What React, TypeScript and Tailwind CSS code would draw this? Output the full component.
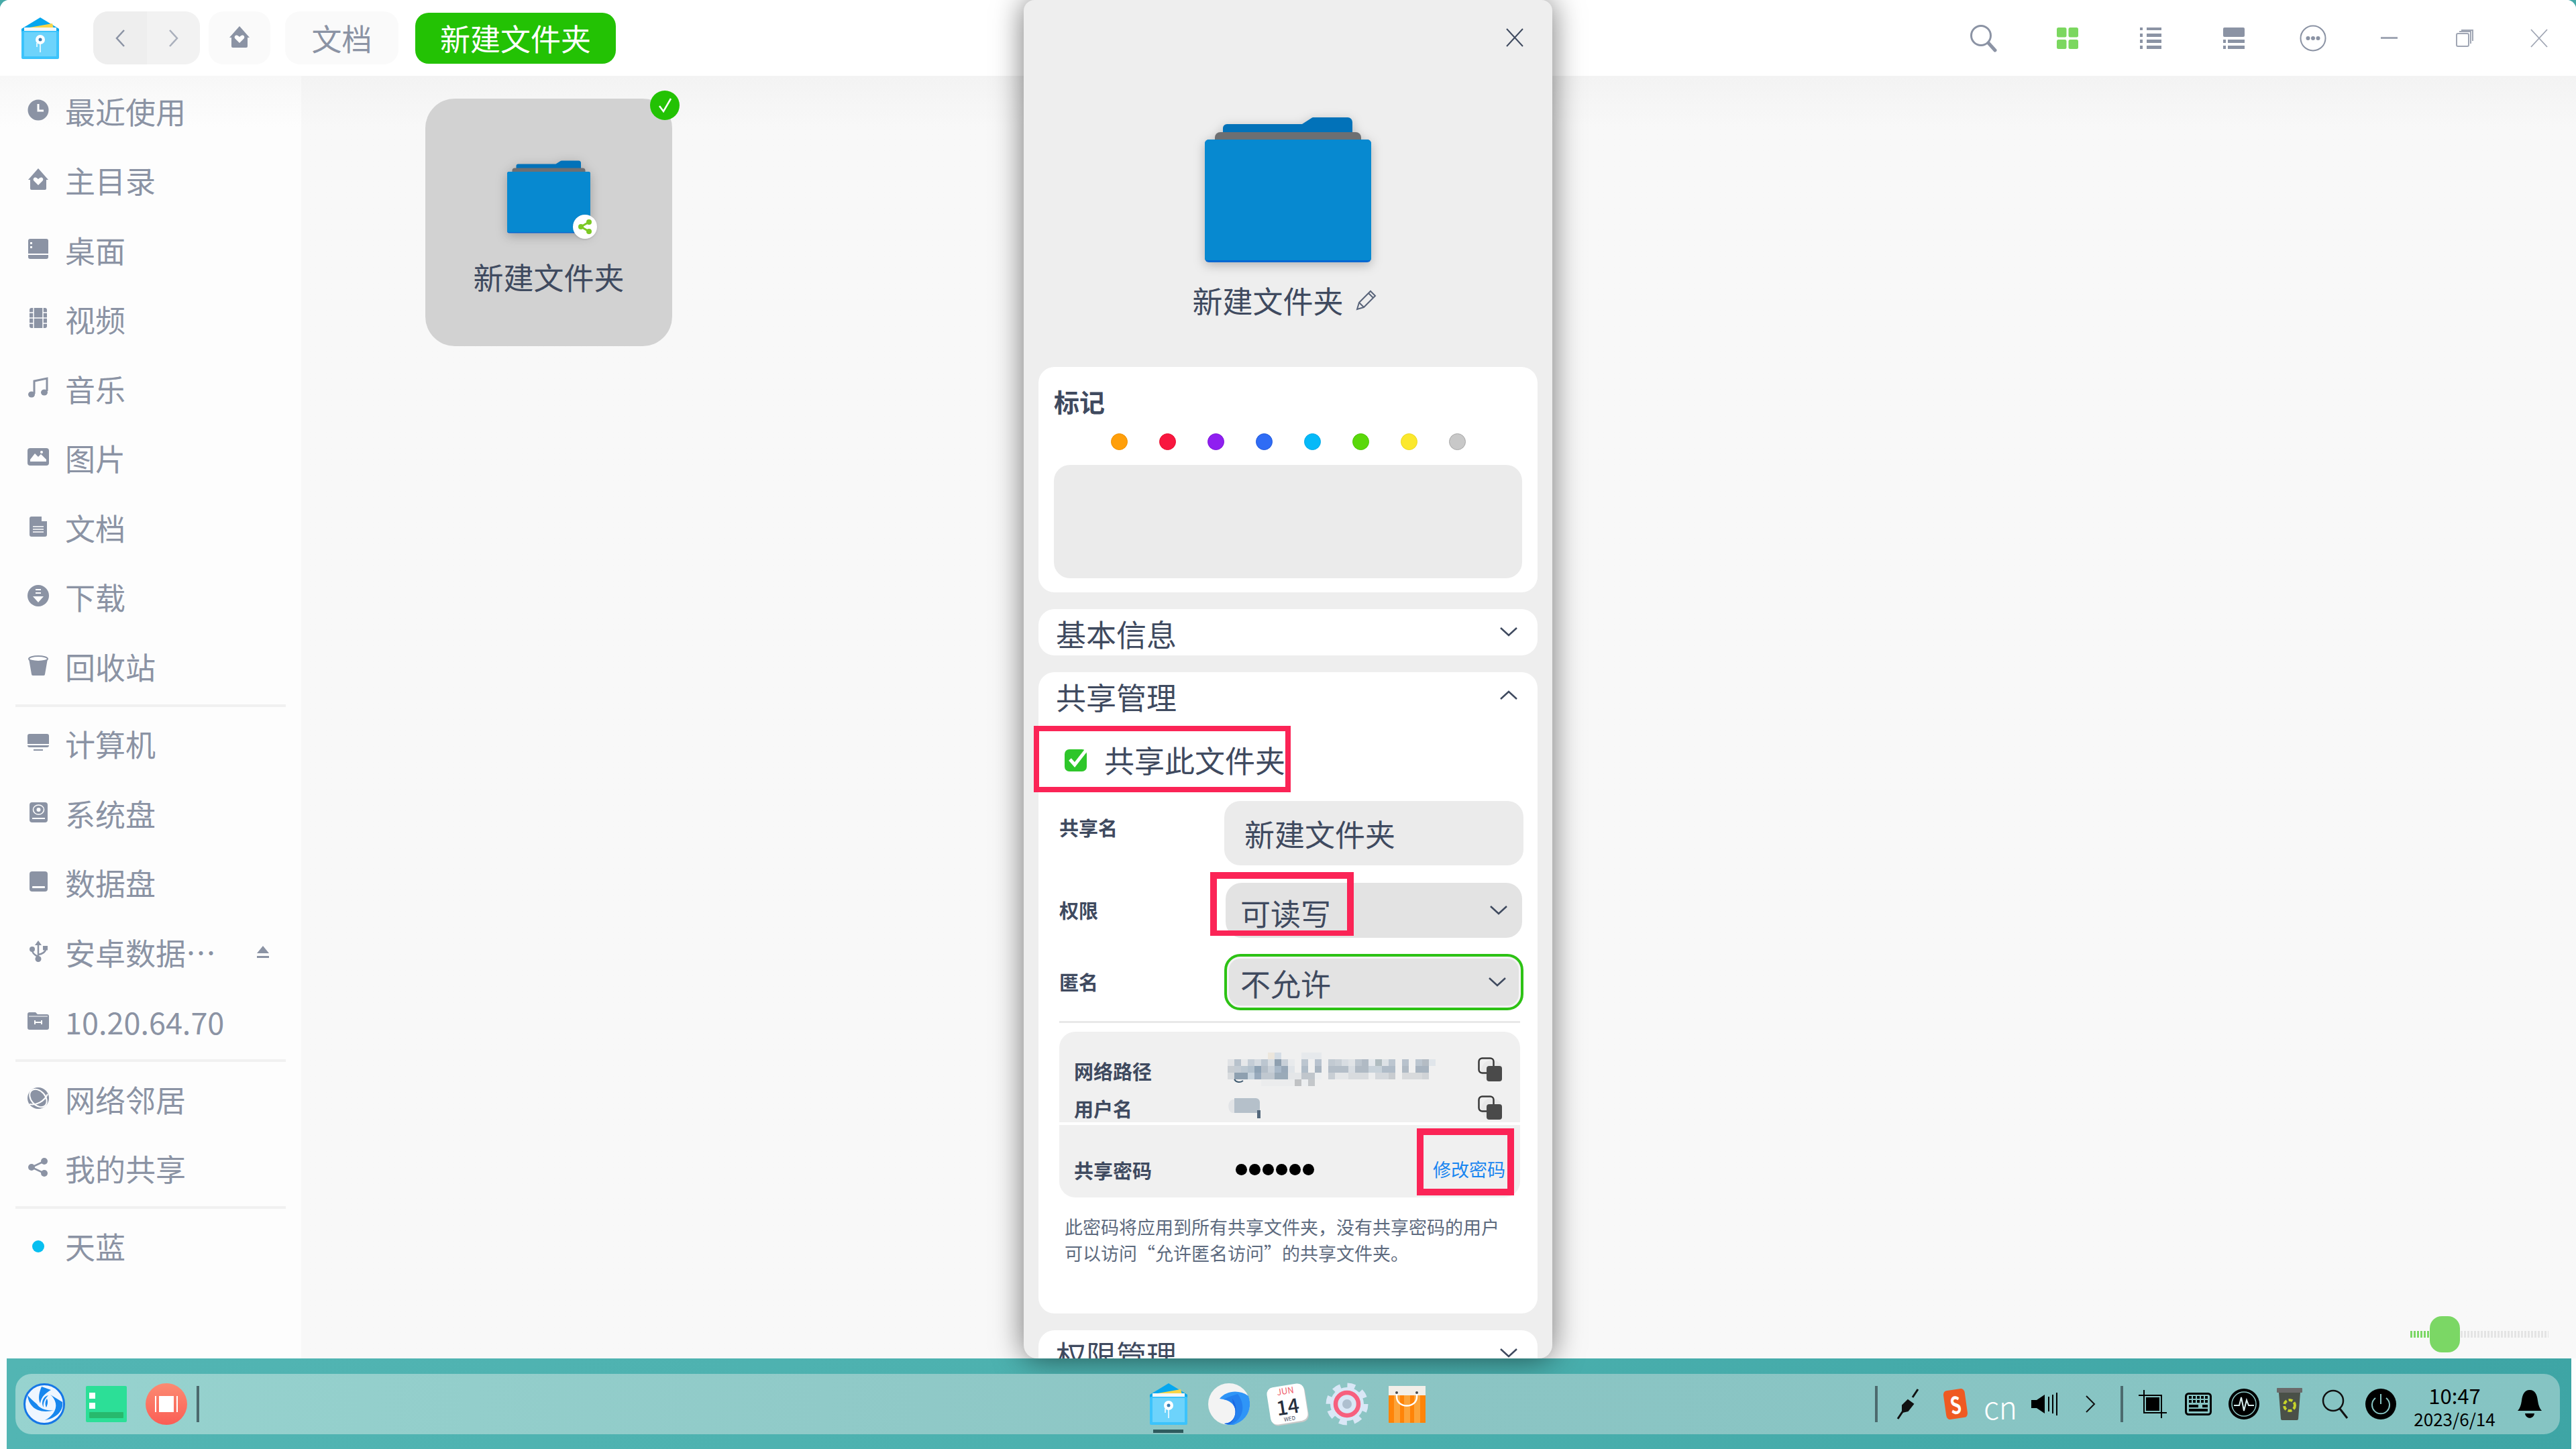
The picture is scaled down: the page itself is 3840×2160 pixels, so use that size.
import React from "react";

const G = "#8b93a4";

const sideIcons: Record<string, React.ReactNode> = {
  clock: (
    <>
      <circle cx="16" cy="16" r="15.500" fill={G} />
      <path d="M16 7v10h8" fill="none" stroke="#fff" strokeWidth="3" />
    </>
  ),
  home: (
    <>
      <path d="M16 0l15 17h-3v13a2 2 0 0 1-2 2H6a2 2 0 0 1-2-2V17H1z" fill={G} />
      <path d="M16 25l-6.500-6.500c-2.500-3 1-6.500 4-4.500l2.500 2 2.500-2c3-2 6.500 1.500 4 4.500z" fill="#fff" />
    </>
  ),
  desktop: (
    <>
      <rect x="1" y="1" width="30" height="30" rx="3" fill={G} />
      <rect x="1" y="23" width="30" height="2" fill="#fff" />
      <rect x="4" y="6" width="3" height="3" fill="#fff" />
      <rect x="4" y="12" width="3" height="3" fill="#fff" />
    </>
  ),
  video: (
    <>
      <rect x="3" y="1" width="26" height="30" rx="3" fill={G} />
      <path d="M9 1v30M23 1v30" stroke="#fff" strokeWidth="1.500" />
      <path d="M3 8h6M3 16h6M3 24h6M23 8h6M23 16h6M23 24h6M9 16h14" stroke="#fff" strokeWidth="1.500" />
    </>
  ),
  music: (
    <>
      <path d="M10 25V6l19-4v19" fill="none" stroke={G} strokeWidth="3" />
      <ellipse cx="6" cy="26" rx="5" ry="4.500" fill={G} />
      <ellipse cx="25" cy="23" rx="5" ry="4.500" fill={G} />
    </>
  ),
  image: (
    <>
      <rect x="0" y="3" width="32" height="26" rx="4" fill={G} />
      <path d="M4 20l7-9 5 5 4-4 8 8v3H4z" fill="#fff" />
      <circle cx="21" cy="9" r="2" fill="#fff" />
    </>
  ),
  doc: (
    <>
      <path d="M3 4a3 3 0 0 1 3-3h15v7h8v20a3 3 0 0 1-3 3H6a3 3 0 0 1-3-3z" fill={G} />
      <path d="M8 16h16M8 20h16M8 24h16" stroke="#fff" strokeWidth="1.500" />
    </>
  ),
  download: (
    <>
      <circle cx="16" cy="16" r="16" fill={G} />
      <path d="M12 7h8M12 12h8" stroke="#fff" strokeWidth="2" />
      <path d="M8 17h16l-8 9z" fill="#fff" />
    </>
  ),
  trash: (
    <>
      <path d="M2 6h28l-4 23a2 2 0 0 1-2 2H8a2 2 0 0 1-2-2z" fill={G} />
      <ellipse cx="16" cy="6" rx="14" ry="4" fill="#fff" stroke={G} strokeWidth="2" />
    </>
  ),
  computer: (
    <>
      <rect x="0" y="3" width="32" height="20" rx="3" fill={G} />
      <rect x="0" y="18" width="32" height="2" fill="#fff" />
      <rect x="9" y="26" width="14" height="2" fill={G} />
    </>
  ),
  system: (
    <>
      <rect x="3" y="1" width="27" height="30" rx="4" fill={G} />
      <rect x="7" y="24" width="19" height="2" fill="#fff" />
      <ellipse cx="16.500" cy="12" rx="8" ry="7" fill="none" stroke="#fff" strokeWidth="1.500" />
      <circle cx="16.500" cy="12" r="3" fill="#fff" />
    </>
  ),
  data: (
    <>
      <rect x="3" y="1" width="27" height="30" rx="4" fill={G} />
      <rect x="7" y="23" width="19" height="3" rx="1" fill="#fff" />
    </>
  ),
  usb: (
    <>
      <path d="M16 4v24M7 14c0 5 4 8 9 10M27 13c0 4-5 7-11 8" fill="none" stroke={G} strokeWidth="2.500" />
      <path d="M16 0l5 7H11z" fill={G} />
      <circle cx="16" cy="27.500" r="4.500" fill={G} />
      <circle cx="7" cy="13" r="4" fill={G} />
      <rect x="23" y="8" width="7" height="6.500" fill={G} />
    </>
  ),
  net: (
    <>
      <path d="M0 7a3 3 0 0 1 3-3h9l3 3h14a3 3 0 0 1 3 3v17a3 3 0 0 1-3 3H3a3 3 0 0 1-3-3z" fill={G} />
      <path d="M2 10h28" stroke="#fff" strokeWidth="1" />
      <path d="M11 19h10M11 16v6M21 16v6" stroke="#fff" strokeWidth="2" />
    </>
  ),
  globe: (
    <>
      <circle cx="16" cy="16" r="16" fill={G} />
      <ellipse cx="16" cy="16" rx="10.500" ry="15" fill="none" stroke="#fff" strokeWidth="2" transform="rotate(-42 16 16)" />
      <path d="M3 25c10 2 22-4 27-15" fill="none" stroke="#fff" strokeWidth="2" />
    </>
  ),
  share: (
    <>
      <path d="M25 7L6 16l19 9" fill="none" stroke={G} strokeWidth="2.500" />
      <circle cx="25" cy="7" r="5" fill={G} />
      <circle cx="6" cy="16" r="5" fill={G} />
      <circle cx="25" cy="25" r="5" fill={G} />
    </>
  ),
  sky: <circle cx="16" cy="18" r="9" fill="#07bff0" />,
};

const sections = [
  [
    ["clock", "最近使用"],
    ["home", "主目录"],
    ["desktop", "桌面"],
    ["video", "视频"],
    ["music", "音乐"],
    ["image", "图片"],
    ["doc", "文档"],
    ["download", "下载"],
    ["trash", "回收站"],
  ],
  [
    ["computer", "计算机"],
    ["system", "系统盘"],
    ["data", "数据盘"],
    ["usb", "安卓数据…"],
    ["net", "10.20.64.70"],
  ],
  [
    ["globe", "网络邻居"],
    ["share", "我的共享"],
  ],
  [["sky", "天蓝"]],
];

const tagColors = [
  "bg-[#ff9f0a] border-[#f09000]",
  "bg-[#f8173f] border-[#e81030]",
  "bg-[#8f1ff0] border-[#7d15d8]",
  "bg-[#2f6cf5] border-[#2058dc]",
  "bg-[#05b9f8] border-[#05aae8]",
  "bg-[#5ad80a] border-[#4cc505]",
  "bg-[#fbe82d] border-[#ecd820]",
  "bg-[#c8c8c8] border-[#a8a8a8]",
];

// blurred-out network path, one list of [x, width, colour] per 10px row
const mosaic: [number, [number, number, string][]][] = [
  [0, [[60, 10, "#ece6dc"], [70, 10, "#d5dde5"], [110, 30, "#e6e9ec"]]],
  [10, [[0, 10, "#e0e2e5"], [10, 10, "#b8c2cc"], [20, 10, "#e6e8ea"], [30, 10, "#c4cdd6"], [40, 10, "#d4dae0"], [50, 10, "#bcc6d0"], [60, 10, "#d8dde2"], [70, 10, "#8fa0b0"], [80, 10, "#c8d0d8"], [90, 10, "#e8eaec"], [110, 10, "#bcc6d0"], [120, 10, "#f0f0f0"], [130, 10, "#b8c2ce"], [150, 10, "#c2cad2"], [160, 10, "#c8cfd6"], [170, 10, "#d8dde2"], [180, 10, "#e0e3e6"], [190, 10, "#bcc5ce"], [200, 10, "#b0bac4"], [210, 10, "#e4e8ec"], [220, 10, "#b0bcc0"], [230, 10, "#dde2e6"], [240, 10, "#bcc6d0"], [260, 10, "#b8c2cc"], [280, 10, "#bcc6d0"], [290, 10, "#b4bcc4"], [300, 10, "#e0e5ea"]]],
  [20, [[0, 10, "#c8cdd2"], [10, 10, "#c4ccd4"], [20, 10, "#bcc8d2"], [30, 10, "#b4c2ce"], [40, 10, "#8ea2b4"], [50, 10, "#b4bec8"], [60, 10, "#c8d0d8"], [70, 10, "#a8b8c8"], [80, 10, "#98a8b8"], [90, 10, "#e0e4e8"], [110, 10, "#b0bcc8"], [120, 10, "#f0f0f0"], [130, 10, "#a8b4c0"], [150, 30, "#b4bec8"], [180, 10, "#d8dde2"], [190, 20, "#b0bac4"], [210, 20, "#c8d2da"], [230, 20, "#b0bcc8"], [260, 10, "#b0bac4"], [280, 20, "#a8b4c0"]]],
  [30, [[0, 10, "#d8dbde"], [10, 20, "#8ea0b0"], [30, 10, "#c8d4de"], [40, 10, "#98aabc"], [50, 20, "#c0c8d0"], [70, 20, "#9aaab8"], [90, 20, "#e4e6e8"], [110, 20, "#c0c6cc"], [130, 10, "#eceef0"], [150, 10, "#c8ced4"], [160, 20, "#e4e6e8"], [180, 30, "#d8dbde"], [210, 10, "#ecedee"], [220, 20, "#d4d8dc"], [240, 10, "#c8ccd0"], [260, 30, "#d8dadc"], [290, 10, "#d0d3d6"]]],
  [40, [[50, 50, "#ebeced"], [100, 10, "#c0c2c4"], [110, 10, "#eceef0"], [120, 10, "#c4c7ca"]]],
];

const Side = ({ icon }: { icon: string }) => (
  <svg width="32" height="32" viewBox="0 0 32 32" className="mb-[4px] shrink-0">
    {sideIcons[icon]}
  </svg>
);

const Chevron = ({ up, className }: { up?: boolean; className?: string }) => (
  <svg width="26" height="14" viewBox="0 0 26 14" className={className}>
    <path d={up ? "M1 13L13 2l12 11" : "M1 1l12 11L25 1"} fill="none" stroke="#3f4a5f" strokeWidth="2.500" />
  </svg>
);

const Folder = ({ width, height }: { width: number; height: number }) => (
  <svg width={width} height={height} viewBox="0 0 248 216" className="drop-shadow-[0_4px_8px_rgba(0,0,0,0.25)]">
    <path d="M27 16a6 6 0 0 1 6-6h112l14-9a6 6 0 0 1 4-1h50a7 7 0 0 1 7 7v30H27z" fill="#0272b9" />
    <path d="M15 30a8 8 0 0 1 8-8h202a8 8 0 0 1 8 8v8H15z" fill="#6d6f72" />
    <rect x="0" y="33" width="248" height="183" rx="6" fill="#0668d2" />
    <path d="M0 39a6 6 0 0 1 6-6h236a6 6 0 0 1 6 6v171a3 3 0 0 1-3 3H3a3 3 0 0 1-3-3z" fill="#0789d0" />
  </svg>
);

const CopyIcon = () => (
  <svg width="36" height="36" viewBox="0 0 36 36">
    <circle cx="21" cy="20" r="16" fill="#e8e8e8" />
    <rect x="1.500" y="1.500" width="22" height="22" rx="5" fill="none" stroke="#3a3a3a" strokeWidth="2.500" />
    <rect x="13" y="13" width="23" height="23" rx="4" fill="#4a4a4a" />
  </svg>
);

const CardHeader = ({ title, up }: { title: string; up?: boolean }) => (
  <div className="relative flex h-[69px] items-center justify-between pl-[26px] pr-[30px]">
    <span className="pt-[5px] text-[45px] leading-[60px] text-[#3f4a5f]">{title}</span>
    <Chevron up={up} className="mb-[1px]" />
  </div>
);

const FileManagerIcon = () => (
  <svg width="56" height="62" viewBox="0 0 56 62">
    <path d="M0 17L28 0l28 17v8H0z" fill="#05a7ef" />
    <path d="M6 16l40-7 3 12H6z" fill="#f8d548" />
    <rect x="4" y="15" width="48" height="10" fill="#f4f7f9" />
    <rect x="0" y="20" width="56" height="42" rx="2" fill="#3cc3fb" />
    <rect x="4" y="22" width="48" height="36" fill="#6dd3fb" />
    <circle cx="28" cy="33" r="7" fill="#fff" />
    <circle cx="28" cy="33" r="2.500" fill="#3b7bb0" />
    <path d="M28 38v14M23 38v6" stroke="#fff" strokeWidth="1.500" />
  </svg>
);

const TrayIcon = ({ children, className = "w-[68px]" }: { children: React.ReactNode; className?: string }) => (
  <div className={`flex shrink-0 items-center justify-center ${className}`}>{children}</div>
);

const TraySep = () => <div className="h-[54px] w-[4px] bg-[#4c6a6e]" />;

export default function App() {
  return (
    <div className="relative h-[2160px] w-[3840px] overflow-hidden bg-[#46aaa8] font-['Noto_Sans_CJK_SC','Noto_Sans',sans-serif]">
      <div className="flex h-full flex-col rounded-tr-[14px] rounded-tl-[14px] bg-[#fdfdfd]">
        {/* title bar */}
        <header className="flex h-[113px] shrink-0 items-center rounded-t-[14px] bg-white">
          <div className="ml-[32px] mr-[51px]">
            <FileManagerIcon />
          </div>
          <div className="flex h-[79px] w-[159px] overflow-hidden rounded-[22px] bg-[#f2f2f2]">
            <div className="flex w-[80px] items-center justify-center bg-[#eeeeee]">
              <svg width="16" height="28" viewBox="0 0 16 28">
                <path d="M14 2L3 14l11 12" fill="none" stroke="#8b93a4" strokeWidth="2.500" />
              </svg>
            </div>
            <div className="flex flex-1 items-center justify-center">
              <svg width="16" height="28" viewBox="0 0 16 28">
                <path d="M2 2l11 12L2 26" fill="none" stroke="#aab0bc" strokeWidth="2.500" />
              </svg>
            </div>
          </div>
          <div className="ml-[13px] flex h-[79px] w-[92px] items-center justify-center rounded-[22px] bg-[#fafafa]">
            <Side icon="home" />
          </div>
          <div className="ml-[22px] flex h-[79px] w-[169px] items-center justify-center rounded-[22px] bg-[#fafafa] text-[45px] text-[#8b93a4]">
            文档
          </div>
          <div className="ml-[25px] flex h-[76px] w-[299px] items-center justify-center rounded-[20px] bg-[#23c204] text-[45px] text-white">
            新建文件夹
          </div>
          <div className="ml-auto flex items-center">
            <TrayIcon className="w-[126px]">
              <svg width="42" height="42" viewBox="0 0 42 42">
                <circle cx="17" cy="17" r="14.500" fill="none" stroke="#8b93a4" strokeWidth="3" />
                <path d="M28 28l10 11" stroke="#8b93a4" strokeWidth="5" strokeLinecap="round" />
              </svg>
            </TrayIcon>
            <TrayIcon className="w-[124px]">
              <svg width="32" height="32" viewBox="0 0 32 32">
                <rect x="0" y="0" width="14.500" height="14.500" rx="2.500" fill="#7bd75f" />
                <rect x="17.500" y="0" width="14.500" height="14.500" rx="2.500" fill="#7bd75f" />
                <rect x="0" y="18" width="14.500" height="14" rx="2.500" fill="#7bd75f" />
                <rect x="17.500" y="18" width="14.500" height="14" rx="2.500" fill="#7bd75f" />
              </svg>
            </TrayIcon>
            <TrayIcon className="w-[124px]">
              <svg width="32" height="32" viewBox="0 0 32 32" fill="#8b93a4">
                <path d="M0 0h4v4H0zM10 0h22v4H10zM0 9h4v5H0zM10 9h22v5H10zM0 18h4v5H0zM10 18h22v5H10zM0 27h4v5H0zM10 27h22v5H10z" />
              </svg>
            </TrayIcon>
            <TrayIcon className="w-[124px]">
              <svg width="32" height="32" viewBox="0 0 32 32" fill="#8b93a4">
                <rect width="32" height="14" rx="2" />
                <path d="M0 18h4v5H0zM7 18h25v5H7zM0 27h4v5H0zM7 27h25v5H7z" />
              </svg>
            </TrayIcon>
            <TrayIcon className="w-[112px]">
              <svg width="40" height="40" viewBox="0 0 40 40" fill="#8b93a4">
                <circle cx="20" cy="20" r="18.500" fill="none" stroke="#8b93a4" strokeWidth="2" />
                <circle cx="12.500" cy="20" r="3" />
                <circle cx="20" cy="20" r="3" />
                <circle cx="27.500" cy="20" r="3" />
              </svg>
            </TrayIcon>
            <TrayIcon className="w-[114px]">
              <div className="h-[3px] w-[25px] bg-[#a0a6b4]" />
            </TrayIcon>
            <TrayIcon className="w-[112px]">
              <svg width="26" height="26" viewBox="0 0 26 26" fill="none" stroke="#a0a6b4" strokeWidth="2">
                <rect x="1" y="6" width="18" height="19" rx="2" />
                <path d="M5 3h17v18M8 1h17v16" />
              </svg>
            </TrayIcon>
            <TrayIcon className="w-[110px]">
              <svg width="26" height="28" viewBox="0 0 26 28">
                <path d="M1 1l24 26M25 1L1 27" stroke="#a0a6b4" strokeWidth="1.800" />
              </svg>
            </TrayIcon>
          </div>
        </header>

        <div className="flex min-h-0 flex-1">
          {/* sidebar */}
          <aside className="w-[449px] shrink-0 bg-gradient-to-b from-[#f7f7f7] from-0% to-[#fdfdfd] to-[4%] pt-[1px]">
            {sections.map((items, s) => (
              <div key={s}>
                {s > 0 && (
                  <div className="flex h-[12px] items-center px-[23px]">
                    <div className="h-[4px] w-full bg-[#f1f1f1]" />
                  </div>
                )}
                {items.map(([icon, label]) => (
                  <div key={label} className="relative flex h-[103.500px] items-center gap-[24px] pl-[41px]">
                    <Side icon={icon} />
                    <span className="text-[45px] leading-[60px] text-[#8b93a4]">{label}</span>
                    {label.startsWith("安卓") && (
                      <svg width="18" height="19" viewBox="0 0 18 19" className="absolute left-[383px] top-[42px]">
                        <path d="M9 0l9 11H0zM0 15h18v3H0z" fill="#8b93a4" />
                      </svg>
                    )}
                  </div>
                ))}
              </div>
            ))}
          </aside>

          {/* content */}
          <main className="relative flex-1 bg-gradient-to-b from-[#f3f3f3] from-0% to-[#f8f8f8] to-[4%]">
            <div className="relative ml-[185px] mt-[34px] flex h-[369px] w-[368px] flex-col items-center rounded-[44px] bg-[#d2d2d2]">
              <div className="relative mt-[92px]">
                <Folder width={124} height={109} />
                <div className="absolute left-[98px] top-[81px] flex h-[36px] w-[36px] items-center justify-center rounded-full bg-white shadow">
                  <svg width="24" height="24" viewBox="0 0 24 24">
                    <path d="M18 5L6 12l12 7" fill="none" stroke="#7cc924" strokeWidth="3" />
                    <circle cx="18" cy="5" r="4" fill="#7cc924" />
                    <circle cx="6" cy="12" r="4" fill="#7cc924" />
                    <circle cx="18" cy="19" r="4" fill="#7cc924" />
                  </svg>
                </div>
              </div>
              <div className="mt-[35px] text-[45px] leading-[60px] text-[#3f4a5f]">新建文件夹</div>
              <div className="absolute -right-[11px] -top-[12px] flex h-[44px] w-[44px] items-center justify-center rounded-full bg-[#23c204]">
                <svg width="24" height="26" viewBox="0 0 24 26">
                  <path d="M4 14l6 8L21 3" fill="none" stroke="#fff" strokeWidth="2.500" />
                </svg>
              </div>
            </div>
          </main>
        </div>

        {/* taskbar */}
        <footer className="ml-[10px] mr-[7px] h-[135px] shrink-0 bg-gradient-to-r from-[#52b5b3] via-[#4bb0ae] to-[#3ea5a5] pt-[23px]">
          <div className="relative z-30 ml-[13px] mr-[17px] grid h-[90px] grid-cols-[1fr_auto_1fr] items-center rounded-[24px] bg-gradient-to-r from-[#97d3cf] via-[#8cc5c4] to-[#85c4c3]">
            <div className="flex items-center pl-[12px]">
              <svg width="62" height="62" viewBox="0 0 62 62">
                <circle cx="31" cy="31" r="29.500" fill="#eef6ff" stroke="#1677e6" strokeWidth="3" />
                <path d="M6 18c2 16 14 29 41 22-11 2-23-2-27-9-6-5-10-9-14-13z" fill="#1787ee" />
                <path d="M27 5l14 5c-7 4-15 10-16 20-4-8-1-18 2-25z" fill="#1787ee" />
                <path d="M40 17l18 11c2 12-8 24-26 27 10-5 18-15 16-25-1-5-4-10-8-13z" fill="#1787ee" />
                <path d="M37 18c-9 2-11 12-7 18-1-6 1-12 7-18zM35 23c-3 4-3 9-1 13 2-4 3-9 1-13z" fill="#1787ee" />
              </svg>
              <svg width="61" height="54" viewBox="0 0 61 54" className="ml-[31px]">
                <rect width="61" height="54" rx="2" fill="#2cdf97" />
                <rect x="5" y="10" width="9" height="9" fill="#fff" />
                <rect x="5" y="25" width="9" height="9" fill="#fff" />
                <rect x="5" y="39" width="51" height="9" rx="1" fill="#27b96d" />
              </svg>
              <div className="ml-[28px] flex h-[62px] w-[62px] items-center justify-center rounded-full bg-gradient-to-b from-[#fb8a72] to-[#fb5d55]">
                <div className="h-[24px] w-[2px] bg-white" />
                <div className="mx-[4px] h-[24px] w-[22px] bg-white" />
                <div className="h-[24px] w-[2px] bg-white" />
              </div>
              <div className="ml-[14px]">
                <TraySep />
              </div>
            </div>

            <div className="flex items-center">
              <div className="relative">
                <FileManagerIcon />
                <div className="absolute -bottom-[12px] left-[5px] h-[5px] w-[45px] bg-[#2f5b5e]" />
              </div>
              <svg width="62" height="62" viewBox="0 0 62 62" className="ml-[31px]">
                <circle cx="31" cy="31" r="31" fill="#f3f3f3" />
                <path d="M17 23C27 11 46 9 60 19c6 16 0 36-22 43-6 1-10 0-14-2 16 0 20-18 14-27-5-7-13-9-21-10z" fill="#2f95f7" />
                <path d="M44 16c10 12 12 34-8 45-5 1-9 0-12-1 16 0 20-18 14-27-4-6-9-8-15-9 7-4 15-6 21-8z" fill="#2480ee" />
                <path d="M36 23c8 10 8 28-4 38-3 0-6 0-8-1 16 0 20-18 14-27-1-4-2-7-2-10z" fill="#1d66e2" />
              </svg>
              <div className="relative ml-[28px] flex h-[56px] w-[56px] -rotate-[9deg] flex-col items-center rounded-[10px] bg-white shadow-[1px_2px_0_#c9c9c9]">
                <span className="text-[13px] leading-[15px] text-[#ef5f6d]">JUN</span>
                <span className="text-[30px] font-medium leading-[30px] text-[#27303f]">14</span>
                <span className="text-[8px] leading-[10px] text-[#3f4a5f]">WED</span>
              </div>
              <svg width="64" height="64" viewBox="0 0 64 64" className="ml-[29px]">
                <circle cx="32" cy="32" r="27" fill="none" stroke="#d9e7f6" strokeWidth="9" strokeDasharray="11.200 10" />
                <circle cx="32" cy="32" r="25" fill="#d9e7f6" />
                <circle cx="32" cy="32" r="17" fill="none" stroke="#f7607e" strokeWidth="6.500" />
                <circle cx="32" cy="32" r="7" fill="#aebfcf" />
              </svg>
              <svg width="55" height="55" viewBox="0 0 55 55" className="ml-[30px]">
                <rect width="55" height="55" fill="#ff8408" />
                <path d="M8 13h9v42H8zM23 13h9v42h-9zM38 13h9v42h-9z" fill="#fca43a" />
                <rect width="55" height="14" fill="#f2efe9" />
                <path d="M12 10v6c0 18 30 18 30 0v-6" fill="none" stroke="#fff" strokeWidth="2.500" />
                <circle cx="12" cy="10" r="2" fill="#4a4a4a" />
                <circle cx="42" cy="10" r="2" fill="#4a4a4a" />
              </svg>
            </div>

            <div className="flex items-center justify-end pr-[9px]">
              <TrayIcon className="w-[26px]">
                <TraySep />
              </TrayIcon>
              <TrayIcon>
                <svg width="34" height="48" viewBox="0 0 34 48">
                  <path d="M2 46l8-12M24 14l8-12" stroke="#111" strokeWidth="3" />
                  <path d="M9 26l8-8 8 6-8 10-8 2zM10 27l6 5" fill="#111" stroke="#111" strokeWidth="2" />
                </svg>
              </TrayIcon>
              <TrayIcon>
                <div className="ml-[5px] flex h-[32px] w-[32px] -rotate-[8deg] scale-y-[1.35] items-center justify-center rounded-[5px] bg-[#ef5a22] text-[26px] font-bold leading-none text-white">
                  S
                </div>
              </TrayIcon>
              <TrayIcon>
                <span className="pl-[4px] pt-[6px] text-[46px] font-light leading-[50px] text-white">cn</span>
              </TrayIcon>
              <TrayIcon>
                <svg width="40" height="34" viewBox="0 0 40 34">
                  <path d="M0 11h8L20 3v28L8 23H0z" fill="#000" />
                  <path d="M26 6v22M32 3v28M38 0v34" stroke="#000" strokeWidth="2" />
                </svg>
              </TrayIcon>
              <TrayIcon>
                <svg width="16" height="26" viewBox="0 0 16 26">
                  <path d="M2 1l12 12L2 25" fill="none" stroke="#111" strokeWidth="2" />
                </svg>
              </TrayIcon>
              <TrayIcon className="w-[25px]">
                <TraySep />
              </TrayIcon>
              <TrayIcon>
                <svg width="42" height="42" viewBox="0 0 42 42">
                  <path d="M8 0v34h34M0 8h34v34" fill="none" stroke="#000" strokeWidth="2" />
                  <rect x="11" y="11" width="20" height="20" fill="#000" />
                </svg>
              </TrayIcon>
              <TrayIcon>
                <svg width="40" height="34" viewBox="0 0 40 34">
                  <rect x="1.500" y="1.500" width="37" height="31" rx="4" fill="none" stroke="#000" strokeWidth="3" />
                  <path d="M6 7h28M6 13h28" stroke="#000" strokeWidth="4" strokeDasharray="4 2" />
                  <path d="M6 20h14M26 20h8M6 26h28" stroke="#000" strokeWidth="4" />
                </svg>
              </TrayIcon>
              <TrayIcon>
                <svg width="46" height="46" viewBox="0 0 46 46">
                  <circle cx="23" cy="23" r="23" fill="#000" />
                  <circle cx="23" cy="23" r="18" fill="none" stroke="#8cc5c4" strokeWidth="1.500" />
                  <path d="M8 25h8l3-12 4 20 4-16 3 8h8" fill="none" stroke="#d8eeee" strokeWidth="2" />
                </svg>
              </TrayIcon>
              <TrayIcon>
                <svg width="38" height="48" viewBox="0 0 38 48">
                  <rect y="0" width="38" height="7" rx="1" fill="#6a6a6a" />
                  <path d="M3 7h32l-3 39a2 2 0 0 1-2 2H8a2 2 0 0 1-2-2z" fill="#4a5048" />
                  <circle cx="19" cy="26" r="8" fill="none" stroke="#c6d32a" strokeWidth="4" strokeDasharray="6 3" />
                </svg>
              </TrayIcon>
              <TrayIcon>
                <svg width="40" height="44" viewBox="0 0 40 44">
                  <circle cx="17" cy="17" r="15" fill="none" stroke="#111" strokeWidth="2.500" />
                  <path d="M27 29l11 14" stroke="#111" strokeWidth="3" />
                </svg>
              </TrayIcon>
              <TrayIcon>
                <svg width="46" height="46" viewBox="0 0 46 46">
                  <circle cx="23" cy="23" r="23" fill="#000" />
                  <path d="M15 14a13 13 0 1 0 16 0" fill="none" stroke="#86c4c3" strokeWidth="2" />
                  <path d="M23 8v15" stroke="#86c4c3" strokeWidth="2" />
                </svg>
              </TrayIcon>
              <div className="flex w-[152px] shrink-0 flex-col items-center pt-[7px] text-black">
                <span className="text-[31px] leading-[35px]">10:47</span>
                <span className="text-[26px] leading-[35px]">2023/6/14</span>
              </div>
              <TrayIcon className="w-[72px]">
                <svg width="36" height="42" viewBox="0 0 36 42">
                  <path d="M18 0c8 0 11 7 12 16 1 7 3 12 6 15H0c3-3 5-8 6-15C7 7 10 0 18 0z" fill="#000" />
                  <path d="M11 35h14c-1 9-13 9-14 0z" fill="#000" />
                </svg>
              </TrayIcon>
            </div>
          </div>
        </footer>
      </div>

      {/* icon size slider */}
      <div className="absolute left-[3593px] top-[1962px] flex h-[54px] w-[206px] items-center">
        <div className="h-[10px] w-[206px] bg-[repeating-linear-gradient(90deg,#e4e4e4_0,#e4e4e4_3px,transparent_3px,transparent_5px)]" />
        <div className="absolute left-0 h-[10px] w-[30px] bg-[repeating-linear-gradient(90deg,#7bd765_0,#7bd765_3px,transparent_3px,transparent_5px)]" />
        <div className="absolute left-[29px] h-[54px] w-[45px] rounded-[18px] bg-[#7bd765]" />
      </div>

      {/* properties dialog */}
      <div className="absolute left-[1526px] top-0 z-20 h-[2025px] w-[788px] overflow-hidden rounded-b-[20px] rounded-t-[16px] bg-[#eeeeee] px-[22px] pt-[41px] shadow-[0_0_45px_rgba(0,0,0,0.55)]">
        <div className="flex justify-end pr-[20px]">
          <svg width="28" height="30" viewBox="0 0 28 30">
            <path d="M2 2l24 26M26 2L2 28" stroke="#3f4a5f" strokeWidth="2" />
          </svg>
        </div>
        <div className="mt-[104px] flex justify-center">
          <Folder width={248} height={216} />
        </div>
        <div className="mt-[27px] flex h-[60px] items-center justify-center gap-[18px] pr-[10px] text-[45px] leading-[60px] text-[#3f4a5f]">
          新建文件夹
          <svg width="32" height="32" viewBox="0 0 32 32" className="mb-[2px]">
            <path d="M2 30l3-10L22 3l7 7-17 17zM19 6l7 7M5 20l7 7" fill="none" stroke="#59647a" strokeWidth="2" />
          </svg>
        </div>

        <section className="mt-[69px] rounded-[24px] bg-white px-[23px] pb-[21px] pt-[26px]">
          <h3 className="text-[38px] font-bold leading-[50px] text-[#3f4a5f]">标记</h3>
          <div className="mt-[23px] flex justify-center gap-[47px]">
            {tagColors.map((c) => (
              <span key={c} className={`h-[25px] w-[25px] rounded-full border ${c}`} />
            ))}
          </div>
          <div className="mt-[22px] h-[169px] rounded-[24px] bg-[#ebebeb]" />
        </section>

        <section className="mt-[25px] overflow-hidden rounded-[24px] bg-white">
          <CardHeader title="基本信息" />
        </section>

        <section className="mt-[25px] h-[956px] overflow-hidden rounded-[24px] bg-white">
          <CardHeader title="共享管理" up />
          <div className="mt-[32px] flex h-[60px] items-center gap-[23px] pl-[39px] text-[45px] leading-[60px] text-[#3f4a5f]">
            <svg width="36" height="36" viewBox="0 0 36 36" className="mb-[2px]">
              <rect y="3" width="33" height="33" rx="7" fill="#2ec62a" />
              <path d="M8 18l7 8L33 3" fill="none" stroke="#fff" strokeWidth="5" />
            </svg>
            共享此文件夹
          </div>
          <div className="mt-[31px] flex h-[96px] pl-[31px] pr-[21px]">
            <div className="w-[246px] pt-[19px] text-[29px] font-bold leading-[40px] text-[#3f4a5f]">共享名</div>
            <div className="flex flex-1 items-center rounded-[24px] bg-[#ebebeb] pl-[30px] pt-[2px] text-[45px] leading-[60px] text-[#3f4a5f]">
              新建文件夹
            </div>
          </div>
          <div className="mt-[26px] flex h-[82px] items-center pl-[31px] pr-[23px]">
            <div className="w-[248px] pb-[3px] text-[29px] font-bold leading-[40px] text-[#3f4a5f]">权限</div>
            <div className="flex h-full flex-1 items-center justify-between rounded-[24px] bg-[#e3e3e3] pl-[22px] pr-[22px]">
              <span className="pt-[7px] text-[45px] leading-[60px] text-[#3f4a5f]">可读写</span>
              <Chevron />
            </div>
          </div>
          <div className="mt-[24px] flex h-[84px] items-center pl-[31px] pr-[21px]">
            <div className="w-[246px] pb-[3px] text-[29px] font-bold leading-[40px] text-[#3f4a5f]">匿名</div>
            <div className="flex h-full flex-1 items-center justify-between rounded-[24px] border-[4px] border-[#2dc215] bg-[#e3e3e3] pl-[20px] pr-[22px] shadow-[inset_0_0_0_3px_#f4f4f4]">
              <span className="pt-[3px] text-[45px] leading-[60px] text-[#3f4a5f]">不允许</span>
              <Chevron />
            </div>
          </div>
          <div className="ml-[31px] mt-[16px] h-[3px] w-[687px] bg-[#e8e8e8]" />
          <div className="ml-[31px] mt-[13px] h-[247px] w-[687px] overflow-hidden rounded-[24px] bg-[#f0f0f0]">
            <div className="relative h-[135px] pl-[22px] text-[29px] font-bold leading-[40px] text-[#3f4a5f]">
              <div className="pt-[38px]">网络路径</div>
              <div className="pt-[16px]">用户名</div>
              <svg width="310" height="50" viewBox="0 0 310 50" className="absolute left-[251px] top-[31px]">
                {mosaic.flatMap(([y, cells]) =>
                  cells.map(([x, w, c]) => <rect key={`${y}-${x}`} x={x} y={y} width={w} height={10} fill={c} />)
                )}
                <path d="M10 40c3 5 9 5 13 2" fill="none" stroke="#3f5a70" strokeWidth="2" />
              </svg>
              <svg width="50" height="32" viewBox="0 0 50 32" className="absolute left-[251px] top-[99px]">
                <path d="M8 2h4v20H8C0 22-2 4 8 2z" fill="#e2e4e7" />
                <path d="M10 0h32a6 6 0 0 1 6 6v16H10z" fill="#b5c0ca" />
                <rect x="44" y="18" width="5" height="12" fill="#54687c" />
              </svg>
              <div className="absolute left-[624px] top-[38px]">
                <CopyIcon />
              </div>
              <div className="absolute left-[624px] top-[95px]">
                <CopyIcon />
              </div>
            </div>
            <div className="h-[4px] bg-white" />
            <div className="relative flex h-[108px] items-center pb-[4px] pl-[22px] pt-[30px] text-[29px] font-bold leading-[40px] text-[#3f4a5f]">
              共享密码
              <div className="absolute left-[263px] top-[58px] flex">
                {[0, 1, 2, 3, 4, 5].map((n) => (
                  <span key={n} className="mr-[3px] h-[17px] w-[17px] rounded-full bg-black" />
                ))}
              </div>
              <span className="absolute left-[557px] top-[46px] text-[27px] font-normal leading-[40px] text-[#1a86f0]">修改密码</span>
            </div>
          </div>
          <p className="ml-[39px] mt-[24px] w-[660px] text-[27px] leading-[39px] text-[#5d6a7e]">
            此密码将应用到所有共享文件夹，没有共享密码的用户
            <br />
            可以访问“允许匿名访问”的共享文件夹。
          </p>
        </section>

        <section className="mt-[25px] h-[69px] overflow-hidden rounded-t-[24px] bg-white">
          <CardHeader title="权限管理" />
        </section>

        {/* annotation boxes */}
        <div className="absolute left-[15px] top-[1082px] h-[99px] w-[383px] border-[8px] border-[#fb2456]" />
        <div className="absolute left-[278px] top-[1300px] h-[95px] w-[214px] border-[10px] border-b-[8px] border-[#fb2456]" />
        <div className="absolute left-[586px] top-[1682px] h-[100px] w-[145px] border-[10px] border-[#fb2456]" />
      </div>
    </div>
  );
}
